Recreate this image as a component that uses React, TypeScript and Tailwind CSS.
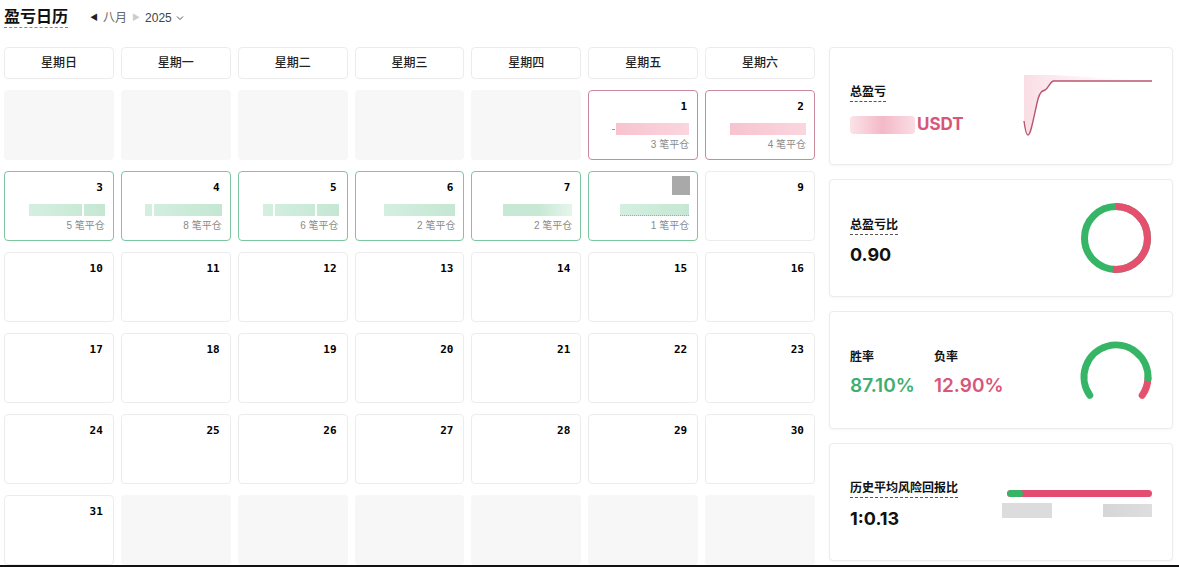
import React from "react";

type Day = {
  day: number;
  kind: "loss" | "win" | "plain";
  count?: number;
  barW?: number;
  slits?: number[];
  hidden?: boolean;
};

const font = { fontFamily: '"Liberation Sans", "Noto Sans CJK SC", sans-serif' };
const numFont = { fontFamily: 'Inter, "Liberation Sans", "Noto Sans CJK SC", sans-serif' };

const weekdays = ["星期日", "星期一", "星期二", "星期三", "星期四", "星期五", "星期六"];

const special: Record<number, Omit<Day, "day">> = {
  1: { kind: "loss", count: 3, barW: 73 },
  2: { kind: "loss", count: 4, barW: 76 },
  3: { kind: "win", count: 5, barW: 76, slits: [70] },
  4: { kind: "win", count: 8, barW: 77, slits: [10] },
  5: { kind: "win", count: 6, barW: 76, slits: [14, 69] },
  6: { kind: "win", count: 2, barW: 71 },
  7: { kind: "win", count: 2, barW: 69 },
  8: { kind: "win", count: 1, barW: 69, hidden: true },
};

function Cell({ d }: { d: Day | null }) {
  if (!d) return <div className="h-[70px] rounded bg-[#f7f7f7]" />;
  const border =
    d.kind === "loss"
      ? "border-[#c98a9c]"
      : d.kind === "win"
      ? "border-[#7cc79f]"
      : "border-[#ececec]";
  return (
    <div className={`flex h-[70px] flex-col items-end rounded border bg-white pr-[8px] pt-[9px] ${border}`}>
      <div className="flex h-[14px] items-start pr-[2px]">
        {d.hidden ? (
          <div className="-mt-[5px] -mr-[3px] h-[19px] w-[18px] bg-[#a9a9a9]" />
        ) : (
          <span
            className="text-[11px] font-bold leading-[14px] text-black"
            style={{ fontFamily: '"DejaVu Sans Mono", monospace' }}
          >
            {d.day}
          </span>
        )}
      </div>
      {d.kind !== "plain" && (
        <>
          <div className="mt-[9px] flex h-[12px] items-center">
            {d.day === 1 && <div className="mr-[1px] h-[1px] w-[3px] bg-[#999]" />}
            <div
              className={`relative h-[12px] ${
                d.kind === "loss"
                  ? "bg-gradient-to-r from-[#f7c3cf] to-[#fad6de]"
                  : d.day === 7
                  ? "bg-gradient-to-r from-[#c6e8d4] via-[#c6e8d4] to-[#e6f5ec]"
                  : "bg-gradient-to-r from-[#d4efe0] to-[#c4e7d3]"
              }`}
              style={{ width: d.barW }}
            >
              {(d.slits || []).map((s) => (
                <div key={s} className="absolute top-0 h-full w-[2px] bg-white" style={{ left: `${s}%` }} />
              ))}
              {d.hidden && <div className="absolute bottom-0 left-0 h-[2px] w-full border-b border-dotted border-[#7fbf9a]" />}
            </div>
          </div>
          <div className="mt-[3px] text-[10px] leading-[13px] text-[#8a8a8a]" style={font}>
            {d.count} 笔平仓
          </div>
        </>
      )}
    </div>
  );
}

function Label({ children }: { children: React.ReactNode }) {
  return (
    <span className="border-b border-dashed border-[#555] pb-[1px] text-[12px] font-bold leading-[16px] text-[#111]">
      {children}
    </span>
  );
}

function PnlChart() {
  const line = "M2 46 C3 54 4 60 6 60 C9 60 12 40 16 24 C18 17 20 16 23 15 C26 14 27 8 31 6 L130 6";
  return (
    <svg width="132" height="64" viewBox="0 0 132 64">
      <defs>
        <linearGradient id="pf" x1="0" y1="0" x2="1" y2="0">
          <stop offset="0" stopColor="#f4b5c4" stopOpacity="0.45" />
          <stop offset="1" stopColor="#fbe3e9" stopOpacity="0" />
        </linearGradient>
      </defs>
      <path d={`${line} L31 0 L2 0 Z`} fill="url(#pf)" />
      <path d={line} fill="none" stroke="#b9566f" strokeWidth="1.4" />
    </svg>
  );
}

function Donut() {
  const r = 31.5;
  const c = 2 * Math.PI * r;
  const pink = 0.515 * c;
  return (
    <svg width="72" height="72" viewBox="0 0 72 72">
      <g transform="rotate(-90 36 36)">
        <circle cx="36" cy="36" r={r} fill="none" stroke="#36b566" strokeWidth="7" />
        <circle
          cx="36"
          cy="36"
          r={r}
          fill="none"
          stroke="#e5506f"
          strokeWidth="7"
          strokeDasharray={`${pink} ${c}`}
        />
      </g>
    </svg>
  );
}

function Gauge() {
  const cx = 40;
  const cy = 40;
  const r = 32;
  const pt = (deg: number) => {
    const a = (deg * Math.PI) / 180;
    return `${(cx + r * Math.sin(a)).toFixed(2)} ${(cy - r * Math.cos(a)).toFixed(2)}`;
  };
  const start = -125;
  const end = 125;
  const mid = start + 250 * 0.871;
  return (
    <svg width="80" height="72" viewBox="0 0 80 72">
      <path d={`M${pt(mid)} A${r} ${r} 0 0 1 ${pt(end)}`} fill="none" stroke="#e5506f" strokeWidth="7" strokeLinecap="round" />
      <path d={`M${pt(start)} A${r} ${r} 0 1 1 ${pt(mid)}`} fill="none" stroke="#36b566" strokeWidth="7" strokeLinecap="round" />
    </svg>
  );
}

function Card({ children }: { children: React.ReactNode }) {
  return (
    <div className="flex h-[118px] items-center justify-between rounded border border-[#ececec] bg-white px-5 shadow-[0_1px_3px_rgba(0,0,0,0.04)]">
      {children}
    </div>
  );
}

export default function App() {
  const cells: (Day | null)[] = [];
  for (let i = 0; i < 5; i++) cells.push(null);
  for (let d = 1; d <= 31; d++) cells.push({ day: d, kind: "plain", ...special[d] });
  while (cells.length < 42) cells.push(null);

  return (
    <div className="flex h-[567px] flex-col overflow-hidden bg-white" style={font}>
      <div className="flex flex-1 gap-[14px] overflow-hidden px-1">
        <div className="flex w-[811px] flex-col">
          <div className="flex h-[34px] items-center gap-[22px] pt-[1px]">
            <span className="border-b border-dashed border-[#888] text-[16px] font-bold leading-[20px] text-[#111]">
              盈亏日历
            </span>
            <div className="flex items-center gap-[5px] pt-[1px] text-[12px] text-[#444]">
              <span className="text-[8px] text-[#222]">◀</span>
              <span className="text-[#666]">八月</span>
              <span className="text-[8px] text-[#ccc]">▶</span>
              <span className="flex items-center gap-[4px]">
                2025
                <svg width="8" height="6" viewBox="0 0 8 6">
                  <path d="M1 1.5 L4 4.5 L7 1.5" fill="none" stroke="#555" strokeWidth="1" />
                </svg>
              </span>
            </div>
          </div>
          <div className="mt-[13px] grid grid-cols-7 gap-x-[7px] gap-y-[11px]">
            {weekdays.map((w) => (
              <div
                key={w}
                className="flex h-[32px] items-center justify-center rounded border border-[#ececec] text-[12px] font-medium text-[#222]"
              >
                {w}
              </div>
            ))}
            {cells.map((c, i) => (
              <Cell key={i} d={c} />
            ))}
          </div>
        </div>
        <div className="flex w-[344px] flex-col gap-[14px] pt-[47px]">
          <Card>
            <div className="flex flex-col items-start gap-[10px] pt-[10px]">
              <Label>总盈亏</Label>
              <div className="flex items-center gap-[2px]">
                <div className="h-[18px] w-[65px] rounded-sm bg-gradient-to-r from-[#fbe3e8] via-[#f3b9c7] to-[#fbdde4]" />
                <span className="text-[17px] font-bold text-[#d9557a]" style={numFont}>
                  USDT
                </span>
              </div>
            </div>
            <div className="-mr-[2px] pt-[2px]">
              <PnlChart />
            </div>
          </Card>
          <Card>
            <div className="flex flex-col items-start gap-[8px] pt-[8px]">
              <Label>总盈亏比</Label>
              <span className="text-[18px] font-bold leading-[24px] text-[#111]" style={numFont}>
                0.90
              </span>
            </div>
            <Donut />
          </Card>
          <Card>
            <div className="flex pt-[6px]">
              <div className="flex w-[84px] flex-col items-start gap-[9px]">
                <span className="text-[12px] font-bold leading-[16px] text-[#111]">胜率</span>
                <span className="text-[19px] font-semibold leading-[24px] text-[#3fae6e]" style={numFont}>
                  87.10%
                </span>
              </div>
              <div className="flex flex-col items-start gap-[9px]">
                <span className="text-[12px] font-bold leading-[16px] text-[#111]">负率</span>
                <span className="text-[19px] font-semibold leading-[24px] text-[#d9557a]" style={numFont}>
                  12.90%
                </span>
              </div>
            </div>
            <div className="-mr-[4px] pt-[6px]">
              <Gauge />
            </div>
          </Card>
          <Card>
            <div className="flex flex-col items-start gap-[9px] pt-[6px]">
              <Label>历史平均风险回报比</Label>
              <span className="text-[18px] font-bold leading-[24px] text-[#111]" style={numFont}>
                1:0.13
              </span>
            </div>
            <div className="flex w-[150px] flex-col items-end gap-[6px] pt-[4px]">
              <div className="flex h-[7px] w-[145px] overflow-hidden rounded-full bg-[#e34d71]">
                <div className="h-full w-[16px] rounded-full bg-[#36b566]" />
              </div>
              <div className="flex w-full items-start justify-between">
                <div className="h-[15px] w-[50px] bg-[#dcdcdc]" />
                <div className="mt-[1px] h-[13px] w-[49px] bg-gradient-to-r from-[#d6d6d6] to-[#dedede]" />
              </div>
            </div>
          </Card>
        </div>
      </div>
      <div className="h-[2px] bg-[#111]" />
    </div>
  );
}
